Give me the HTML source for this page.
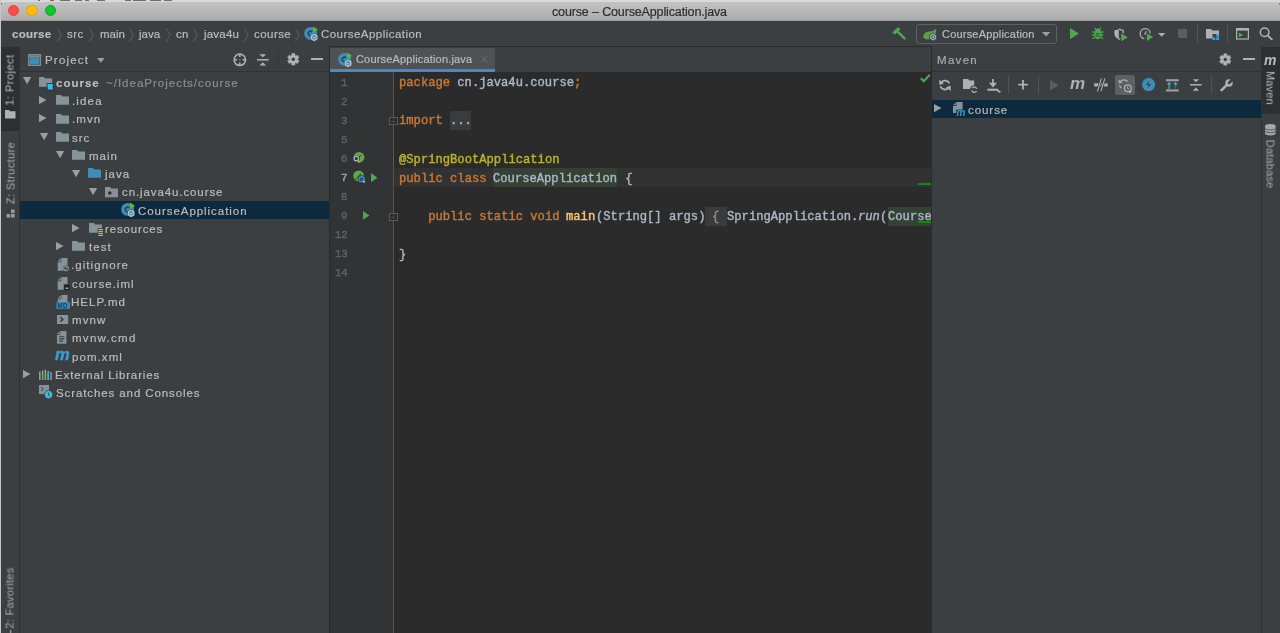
<!DOCTYPE html>
<html><head><meta charset="utf-8">
<style>
*{margin:0;padding:0;box-sizing:border-box}
html,body{width:1280px;height:633px;overflow:hidden;background:#3c3f41}
body{position:relative;font-family:"Liberation Sans",sans-serif;color:#bbbbbb}
.a{position:absolute}
.t{position:absolute;white-space:pre;will-change:transform}
svg{position:absolute;overflow:visible}
</style></head><body>
<div class="a" style="left:0;top:0;width:1280px;height:3px;background:#d9d9d9"></div>
<div class="a" style="left:38px;top:0;width:2px;height:1px;background:#6e6e6e"></div>
<div class="a" style="left:50px;top:0;width:4px;height:1px;background:#6e6e6e"></div>
<div class="a" style="left:60px;top:0;width:10px;height:1px;background:#6e6e6e"></div>
<div class="a" style="left:75px;top:0;width:7px;height:1px;background:#6e6e6e"></div>
<div class="a" style="left:85px;top:0;width:4px;height:1px;background:#6e6e6e"></div>
<div class="a" style="left:97px;top:0;width:8px;height:1px;background:#6e6e6e"></div>
<div class="a" style="left:125px;top:0;width:6px;height:1px;background:#6e6e6e"></div>
<div class="a" style="left:133px;top:0;width:13px;height:1px;background:#6e6e6e"></div>
<div class="a" style="left:150px;top:0;width:11px;height:1px;background:#6e6e6e"></div>
<div class="a" style="left:164px;top:0;width:8px;height:1px;background:#6e6e6e"></div>
<div class="a" style="left:0;top:0;width:1px;height:633px;background:#c8c8c8"></div>
<div class="a" style="left:1px;top:2px;width:1279px;height:19px;background:linear-gradient(#c3c3c4,#acacac);border-radius:4px 4px 0 0"></div>
<div class="a" style="left:1px;top:20px;width:1279px;height:1px;background:#9a9a9a"></div>
<div class="a" style="left:8.00px;top:5.2px;width:11.2px;height:11.2px;border-radius:50%;background:#fd4e4b;border:0.5px solid #e0443e"></div>
<div class="a" style="left:26.40px;top:5.2px;width:11.2px;height:11.2px;border-radius:50%;background:#fdbb0c;border:0.5px solid #dea20a"></div>
<div class="a" style="left:44.70px;top:5.2px;width:11.2px;height:11.2px;border-radius:50%;background:#0dc92c;border:0.5px solid #0aa824"></div>
<div class="t" style="left:551.60px;top:6.00px;font-size:12.5px;line-height:12.5px;color:#2e2e2e;font-weight:400;letter-spacing:-0.14px;font-family:'Liberation Sans';-webkit-text-stroke:0.2px #2e2e2e;">course – CourseApplication.java</div>
<div class="a" style="left:1px;top:21px;width:1279px;height:25px;background:#3c3f41"></div>
<div class="a" style="left:1px;top:45.5px;width:1279px;height:1px;background:#2b2b2b"></div>
<div class="t" style="left:11.60px;top:29.00px;font-size:11.5px;line-height:11.5px;color:#bbbbbb;font-weight:700;letter-spacing:0.3px;font-family:'Liberation Sans';-webkit-text-stroke:0.2px #bbbbbb;">course</div>
<div class="t" style="left:67.20px;top:29.00px;font-size:11.5px;line-height:11.5px;color:#bbbbbb;font-weight:400;letter-spacing:0.5px;font-family:'Liberation Sans';-webkit-text-stroke:0.2px #bbbbbb;">src</div>
<div class="t" style="left:99.60px;top:29.00px;font-size:11.5px;line-height:11.5px;color:#bbbbbb;font-weight:400;letter-spacing:0.0px;font-family:'Liberation Sans';-webkit-text-stroke:0.2px #bbbbbb;">main</div>
<div class="t" style="left:139.00px;top:29.00px;font-size:11.5px;line-height:11.5px;color:#bbbbbb;font-weight:400;letter-spacing:0.0px;font-family:'Liberation Sans';-webkit-text-stroke:0.2px #bbbbbb;">java</div>
<div class="t" style="left:176.20px;top:29.00px;font-size:11.5px;line-height:11.5px;color:#bbbbbb;font-weight:400;letter-spacing:0.2px;font-family:'Liberation Sans';-webkit-text-stroke:0.2px #bbbbbb;">cn</div>
<div class="t" style="left:203.60px;top:29.00px;font-size:11.5px;line-height:11.5px;color:#bbbbbb;font-weight:400;letter-spacing:0.2px;font-family:'Liberation Sans';-webkit-text-stroke:0.2px #bbbbbb;">java4u</div>
<div class="t" style="left:254.20px;top:29.00px;font-size:11.5px;line-height:11.5px;color:#bbbbbb;font-weight:400;letter-spacing:0.45px;font-family:'Liberation Sans';-webkit-text-stroke:0.2px #bbbbbb;">course</div>
<div class="t" style="left:320.80px;top:29.00px;font-size:11.5px;line-height:11.5px;color:#bbbbbb;font-weight:400;letter-spacing:0.46px;font-family:'Liberation Sans';-webkit-text-stroke:0.2px #bbbbbb;">CourseApplication</div>
<svg style="left:56.7px;top:27.5px" width="5" height="14"><path d="M0.5 0.5 L4.2 7 L0.5 13.5" fill="none" stroke="#5b5f62" stroke-width="1"/></svg>
<svg style="left:89px;top:27.5px" width="5" height="14"><path d="M0.5 0.5 L4.2 7 L0.5 13.5" fill="none" stroke="#5b5f62" stroke-width="1"/></svg>
<svg style="left:129px;top:27.5px" width="5" height="14"><path d="M0.5 0.5 L4.2 7 L0.5 13.5" fill="none" stroke="#5b5f62" stroke-width="1"/></svg>
<svg style="left:165.8px;top:27.5px" width="5" height="14"><path d="M0.5 0.5 L4.2 7 L0.5 13.5" fill="none" stroke="#5b5f62" stroke-width="1"/></svg>
<svg style="left:193px;top:27.5px" width="5" height="14"><path d="M0.5 0.5 L4.2 7 L0.5 13.5" fill="none" stroke="#5b5f62" stroke-width="1"/></svg>
<svg style="left:243.5px;top:27.5px" width="5" height="14"><path d="M0.5 0.5 L4.2 7 L0.5 13.5" fill="none" stroke="#5b5f62" stroke-width="1"/></svg>
<svg style="left:295.3px;top:27.5px" width="5" height="14"><path d="M0.5 0.5 L4.2 7 L0.5 13.5" fill="none" stroke="#5b5f62" stroke-width="1"/></svg>
<svg style="left:303.9px;top:26.4px" width="15" height="16" viewBox="0 0 15 16"><circle cx="6.6" cy="7.4" r="6.4" fill="#3d8fb8"/><path d="M8.3 6.0 A2.3 2.3 0 1 0 8.3 8.9" fill="none" stroke="#27485c" stroke-width="1.7"/><path d="M9.0 0.4 L14.1 3.8 L9.0 7.0 Z" fill="#55b93c"/><polygon points="13.74,13.40 10.10,15.50 6.46,13.40 6.46,9.20 10.10,7.10 13.74,9.20" fill="#3c3f41"/><polygon points="12.87,12.90 10.10,14.50 7.33,12.90 7.33,9.70 10.10,8.10 12.87,9.70" fill="#3d8fb8" stroke="#c2c7cc" stroke-width="1.2"/><path d="M8.6 10.9 L10.1 12.3 L11.6 10.9" fill="none" stroke="#e0e4e8" stroke-width="0.9"/></svg>
<svg style="left:891px;top:26.5px" width="15" height="14" viewBox="0 0 15 14"><path d="M1.2 5.6 L6.6 0.6 L8.6 0.9 L9.2 2.6 L4.0 7.6 Z" fill="#4ea851"/><path d="M5.8 3.8 L13.6 11.4" stroke="#4ea851" stroke-width="2.4" stroke-linecap="round"/></svg>
<div class="a" style="left:916.3px;top:24.2px;width:140.6px;height:19.5px;border:1px solid #5e6163;border-radius:3px"></div>
<svg style="left:923.3px;top:28.4px" width="15" height="13" viewBox="0 0 15 13"><path d="M0.3 9.5 C0.0 6.0 2.5 4.0 6.0 3.6 C9.0 3.2 11.5 2.5 13.2 0.4 C13.4 4.5 12.5 8.0 8.0 10.5 C5.0 12.0 2.0 11.5 0.3 9.5 Z" fill="#5a9e45"/><path d="M10.1 5.0 L13.6 7.0 V11.0 L10.1 13.0 L6.6 11.0 V7.0 Z" fill="#9aa6b2" stroke="#3c3f41" stroke-width="0.8"/><circle cx="10.1" cy="9" r="1.6" fill="none" stroke="#56606a" stroke-width="0.9"/></svg>
<div class="t" style="left:941.80px;top:29.00px;font-size:11px;line-height:11px;color:#bbbbbb;font-weight:400;letter-spacing:0.2px;font-family:'Liberation Sans';-webkit-text-stroke:0.2px #bbbbbb;">CourseApplication</div>
<svg style="left:1041.7px;top:32.4px" width="9" height="5" viewBox="0 0 9 5"><path d="M0 0 H8.3 L4.15 4.6 Z" fill="#9e9e9e"/></svg>
<svg style="left:1069.8px;top:28.2px" width="10" height="12" viewBox="0 0 10 12"><path d="M0 0 L8.9 5.6 L0 11.2 Z" fill="#4ea851"/></svg>
<svg style="left:1091.5px;top:27.2px" width="12" height="14" viewBox="0 0 12 14"><ellipse cx="5.8" cy="7.6" rx="3.8" ry="4.6" fill="#4ea851"/><path d="M2.6 0.6 L4.2 3 M9 0.6 L7.4 3 M0.2 5 H2.4 M9.2 5 H11.4 M0.2 8 H2.4 M9.2 8 H11.4 M0.4 11.6 L2.6 10.6 M11.2 11.6 L9 10.6" stroke="#4ea851" stroke-width="1.3"/><ellipse cx="5.8" cy="3.2" rx="2.4" ry="1.6" fill="#4ea851"/><path d="M3.6 6.8 H8 M3.6 9 H8" stroke="#3c3f41" stroke-width="1"/></svg>
<svg style="left:1114.3px;top:28.8px" width="15" height="13" viewBox="0 0 15 13"><path d="M0.4 1.4 L4.8 0.2 V10.4 C2.2 9.4 0.4 7.4 0.4 4.6 Z" fill="#afb1b3"/><path d="M4.8 0.2 L9.2 1.4 V4.2" fill="none" stroke="#afb1b3" stroke-width="1.3"/><path d="M4.8 10.4 L6.2 9.6" stroke="#afb1b3" stroke-width="1.2"/><path d="M7.2 4.4 L13.9 8.3 L7.2 12.2 Z" fill="#4ea851"/></svg>
<svg style="left:1138.6px;top:28px" width="15" height="14" viewBox="0 0 15 14"><path d="M11.2 5.4 A5 5 0 1 0 5.4 10.6" fill="none" stroke="#afb1b3" stroke-width="1.3"/><path d="M5.6 6.6 L7.4 3.2" stroke="#afb1b3" stroke-width="1.2"/><path d="M7.8 5.2 L14.2 9.1 L7.8 13 Z" fill="#4ea851"/></svg>
<svg style="left:1158.4px;top:32.8px" width="8" height="4" viewBox="0 0 8 4"><path d="M0 0 H7.3 L3.65 3.7 Z" fill="#afb1b3"/></svg>
<div class="a" style="left:1177.7px;top:29px;width:9.4px;height:9.3px;background:#5b5d5f"></div>
<div class="a" style="left:1197.2px;top:25px;width:1px;height:17.6px;background:#515456"></div>
<div class="a" style="left:1227.1px;top:25px;width:1px;height:17.6px;background:#515456"></div>
<svg style="left:1205.9px;top:28.9px" width="14" height="12" viewBox="0 0 14 12"><path d="M0 0 H5 L6.3 1.6 H13 V5 H6.5 V9.4 H0 Z" fill="#afb1b3"/><rect x="10.2" y="5" width="2.9" height="2.7" fill="#40a0e0"/><rect x="6.4" y="8.4" width="2.9" height="2.7" fill="#40a0e0"/><rect x="10.2" y="8.4" width="2.9" height="2.7" fill="#40a0e0"/></svg>
<svg style="left:1235.9px;top:27.8px" width="14" height="12" viewBox="0 0 14 12"><rect x="0.6" y="0.6" width="11.8" height="10.4" fill="none" stroke="#afb1b3" stroke-width="1.2"/><rect x="0.6" y="0.6" width="11.8" height="2" fill="#afb1b3"/><path d="M2.8 4.5 L7.2 6.9 L2.8 9.3 Z" fill="#4ea851"/></svg>
<svg style="left:1259px;top:27.2px" width="15" height="14" viewBox="0 0 15 14"><circle cx="5.6" cy="5.3" r="4.3" fill="none" stroke="#afb1b3" stroke-width="1.5"/><path d="M8.6 8.4 L12.8 12.4" stroke="#afb1b3" stroke-width="1.8" stroke-linecap="round"/></svg>
<div class="a" style="left:1px;top:46px;width:19px;height:587px;background:#3c3f41"></div>
<div class="a" style="left:19px;top:46px;width:1px;height:587px;background:#323232"></div>
<div class="a" style="left:1px;top:46.5px;width:18px;height:84.5px;background:#2d2f30"></div>
<div class="a" style="left:20px;top:46px;width:309px;height:587px;background:#3c3f41"></div>
<div class="a" style="left:20px;top:70.5px;width:309px;height:1px;background:#323232"></div>
<div class="t" style="left:44.80px;top:55.00px;font-size:11.5px;line-height:11.5px;color:#bbbbbb;font-weight:400;letter-spacing:1.2px;font-family:'Liberation Sans';-webkit-text-stroke:0.2px #bbbbbb;">Project</div>
<div class="a" style="left:20px;top:201px;width:309px;height:18px;background:#0d293e"></div>
<div class="t" style="left:55.80px;top:78.00px;font-size:11.5px;line-height:11.5px;color:#bbbbbb;font-weight:700;letter-spacing:1.0px;font-family:'Liberation Sans';-webkit-text-stroke:0.2px #bbbbbb;">course</div>
<div class="t" style="left:72.00px;top:96.00px;font-size:11.5px;line-height:11.5px;color:#bbbbbb;font-weight:400;letter-spacing:1.15px;font-family:'Liberation Sans';-webkit-text-stroke:0.2px #bbbbbb;">.idea</div>
<div class="t" style="left:72.00px;top:114.00px;font-size:11.5px;line-height:11.5px;color:#bbbbbb;font-weight:400;letter-spacing:1.1px;font-family:'Liberation Sans';-webkit-text-stroke:0.2px #bbbbbb;">.mvn</div>
<div class="t" style="left:72.40px;top:133.00px;font-size:11.5px;line-height:11.5px;color:#bbbbbb;font-weight:400;letter-spacing:1.0px;font-family:'Liberation Sans';-webkit-text-stroke:0.2px #bbbbbb;">src</div>
<div class="t" style="left:88.60px;top:151.00px;font-size:11.5px;line-height:11.5px;color:#bbbbbb;font-weight:400;letter-spacing:1.0px;font-family:'Liberation Sans';-webkit-text-stroke:0.2px #bbbbbb;">main</div>
<div class="t" style="left:104.90px;top:169.00px;font-size:11.5px;line-height:11.5px;color:#bbbbbb;font-weight:400;letter-spacing:1.0px;font-family:'Liberation Sans';-webkit-text-stroke:0.2px #bbbbbb;">java</div>
<div class="t" style="left:121.90px;top:187.00px;font-size:11.5px;line-height:11.5px;color:#bbbbbb;font-weight:400;letter-spacing:0.9px;font-family:'Liberation Sans';-webkit-text-stroke:0.2px #bbbbbb;">cn.java4u.course</div>
<div class="t" style="left:138.40px;top:206.00px;font-size:11.5px;line-height:11.5px;color:#bbbbbb;font-weight:400;letter-spacing:0.95px;font-family:'Liberation Sans';-webkit-text-stroke:0.2px #bbbbbb;">CourseApplication</div>
<div class="t" style="left:105.30px;top:224.00px;font-size:11.5px;line-height:11.5px;color:#bbbbbb;font-weight:400;letter-spacing:0.84px;font-family:'Liberation Sans';-webkit-text-stroke:0.2px #bbbbbb;">resources</div>
<div class="t" style="left:88.70px;top:242.00px;font-size:11.5px;line-height:11.5px;color:#bbbbbb;font-weight:400;letter-spacing:1.03px;font-family:'Liberation Sans';-webkit-text-stroke:0.2px #bbbbbb;">test</div>
<div class="t" style="left:71.30px;top:260.00px;font-size:11.5px;line-height:11.5px;color:#bbbbbb;font-weight:400;letter-spacing:1.07px;font-family:'Liberation Sans';-webkit-text-stroke:0.2px #bbbbbb;">.gitignore</div>
<div class="t" style="left:71.90px;top:279.00px;font-size:11.5px;line-height:11.5px;color:#bbbbbb;font-weight:400;letter-spacing:1.02px;font-family:'Liberation Sans';-webkit-text-stroke:0.2px #bbbbbb;">course.iml</div>
<div class="t" style="left:71.30px;top:297.00px;font-size:11.5px;line-height:11.5px;color:#bbbbbb;font-weight:400;letter-spacing:1.03px;font-family:'Liberation Sans';-webkit-text-stroke:0.2px #bbbbbb;">HELP.md</div>
<div class="t" style="left:71.80px;top:315.00px;font-size:11.5px;line-height:11.5px;color:#bbbbbb;font-weight:400;letter-spacing:1.1px;font-family:'Liberation Sans';-webkit-text-stroke:0.2px #bbbbbb;">mvnw</div>
<div class="t" style="left:71.80px;top:333.00px;font-size:11.5px;line-height:11.5px;color:#bbbbbb;font-weight:400;letter-spacing:1.28px;font-family:'Liberation Sans';-webkit-text-stroke:0.2px #bbbbbb;">mvnw.cmd</div>
<div class="t" style="left:71.80px;top:352.00px;font-size:11.5px;line-height:11.5px;color:#bbbbbb;font-weight:400;letter-spacing:1.07px;font-family:'Liberation Sans';-webkit-text-stroke:0.2px #bbbbbb;">pom.xml</div>
<div class="t" style="left:55.20px;top:370.00px;font-size:11.5px;line-height:11.5px;color:#bbbbbb;font-weight:400;letter-spacing:0.87px;font-family:'Liberation Sans';-webkit-text-stroke:0.2px #bbbbbb;">External Libraries</div>
<div class="t" style="left:55.80px;top:388.00px;font-size:11.5px;line-height:11.5px;color:#bbbbbb;font-weight:400;letter-spacing:0.9px;font-family:'Liberation Sans';-webkit-text-stroke:0.2px #bbbbbb;">Scratches and Consoles</div>
<div class="t" style="left:106.00px;top:78.00px;font-size:11.5px;line-height:11.5px;color:#8c8c8c;font-weight:400;letter-spacing:1.0px;font-family:'Liberation Sans';-webkit-text-stroke:0.2px #8c8c8c;">~/IdeaProjects/course</div>
<svg style="left:23px;top:77.4px" width="8.2" height="7.4" viewBox="0 0 8.2 7.4"><path d="M0 0 H8.2 L4.1 7.2 Z" fill="#9e9e9e"/></svg>
<svg style="left:38.9px;top:76.9px" width="15" height="14" viewBox="0 0 15 14"><path d="M0 0 H5 L6.3 1.4 H13.2 V9.8 H0 Z" fill="#87939a"/><rect x="8.1" y="6.6" width="6.1" height="6.4" fill="#40b6e0" stroke="#2b2b2b" stroke-width="0.8"/></svg>
<svg style="left:38.9px;top:96.24px" width="7.6" height="8.4" viewBox="0 0 7.6 8.4"><path d="M0 0 L7.5 4.1 L0 8.2 Z" fill="#9e9e9e"/></svg>
<svg style="left:55.7px;top:95.33999999999999px" width="13" height="9.8" viewBox="0 0 13 9.8"><path d="M0 0 H5 L6.3 1.5 H13 V9.8 H0 Z" fill="#87939a"/></svg>
<svg style="left:38.9px;top:114.48px" width="7.6" height="8.4" viewBox="0 0 7.6 8.4"><path d="M0 0 L7.5 4.1 L0 8.2 Z" fill="#9e9e9e"/></svg>
<svg style="left:55.7px;top:113.58px" width="13" height="9.8" viewBox="0 0 13 9.8"><path d="M0 0 H5 L6.3 1.5 H13 V9.8 H0 Z" fill="#87939a"/></svg>
<svg style="left:39.5px;top:133.11999999999998px" width="8.2" height="7.4" viewBox="0 0 8.2 7.4"><path d="M0 0 H8.2 L4.1 7.2 Z" fill="#9e9e9e"/></svg>
<svg style="left:55.9px;top:131.82px" width="13" height="9.8" viewBox="0 0 13 9.8"><path d="M0 0 H5 L6.3 1.5 H13 V9.8 H0 Z" fill="#87939a"/></svg>
<svg style="left:56.0px;top:151.35999999999999px" width="8.2" height="7.4" viewBox="0 0 8.2 7.4"><path d="M0 0 H8.2 L4.1 7.2 Z" fill="#9e9e9e"/></svg>
<svg style="left:72.2px;top:150.06px" width="13" height="9.8" viewBox="0 0 13 9.8"><path d="M0 0 H5 L6.3 1.5 H13 V9.8 H0 Z" fill="#87939a"/></svg>
<svg style="left:72.2px;top:169.6px" width="8.2" height="7.4" viewBox="0 0 8.2 7.4"><path d="M0 0 H8.2 L4.1 7.2 Z" fill="#9e9e9e"/></svg>
<svg style="left:88.4px;top:168.3px" width="13" height="9.8" viewBox="0 0 13 9.8"><path d="M0 0 H5 L6.3 1.5 H13 V9.8 H0 Z" fill="#3d8db5"/></svg>
<svg style="left:88.5px;top:187.84px" width="8.2" height="7.4" viewBox="0 0 8.2 7.4"><path d="M0 0 H8.2 L4.1 7.2 Z" fill="#9e9e9e"/></svg>
<svg style="left:105.1px;top:186.54000000000002px" width="13.2" height="10.2" viewBox="0 0 13.2 10.2"><path d="M0 0 H5 L6.3 1.4 H13 V10.2 H0 Z" fill="#87939a"/><circle cx="4.8" cy="6.0" r="1.8" fill="#2e3133"/></svg>
<svg style="left:120.8px;top:202.17999999999998px" width="15" height="16" viewBox="0 0 15 16"><circle cx="6.6" cy="7.4" r="6.4" fill="#3d8fb8"/><path d="M8.3 6.0 A2.3 2.3 0 1 0 8.3 8.9" fill="none" stroke="#27485c" stroke-width="1.7"/><path d="M9.0 0.4 L14.1 3.8 L9.0 7.0 Z" fill="#55b93c"/><polygon points="13.74,13.40 10.10,15.50 6.46,13.40 6.46,9.20 10.10,7.10 13.74,9.20" fill="#0d293e"/><polygon points="12.87,12.90 10.10,14.50 7.33,12.90 7.33,9.70 10.10,8.10 12.87,9.70" fill="#3d8fb8" stroke="#c2c7cc" stroke-width="1.2"/><path d="M8.6 10.9 L10.1 12.3 L11.6 10.9" fill="none" stroke="#e0e4e8" stroke-width="0.9"/></svg>
<svg style="left:72.1px;top:223.91999999999996px" width="7.6" height="8.4" viewBox="0 0 7.6 8.4"><path d="M0 0 L7.5 4.1 L0 8.2 Z" fill="#9e9e9e"/></svg>
<svg style="left:88.6px;top:223.01999999999998px" width="15" height="14" viewBox="0 0 15 14"><path d="M0 0 H5 L6.3 1.4 H13 V9.8 H0 Z" fill="#87939a"/><rect x="8.6" y="5.2" width="6" height="8" fill="#3c3f41"/><path d="M9.3 6.6 H14 M9.3 8.5 H14 M9.3 10.4 H14 M9.3 12.3 H14" stroke="#d9a343" stroke-width="1.2"/></svg>
<svg style="left:55.7px;top:242.15999999999997px" width="7.6" height="8.4" viewBox="0 0 7.6 8.4"><path d="M0 0 L7.5 4.1 L0 8.2 Z" fill="#9e9e9e"/></svg>
<svg style="left:71.8px;top:241.26px" width="13" height="9.8" viewBox="0 0 13 9.8"><path d="M0 0 H5 L6.3 1.5 H13 V9.8 H0 Z" fill="#87939a"/></svg>
<svg style="left:56.5px;top:258.09999999999997px" width="14" height="15" viewBox="0 0 14 15"><path d="M4.3 0 H10.5 V12.7 H0.7 V4.2 H4.3 Z M0.7 3.4 L3.7 0.2 V3.4 Z" fill="#87939a"/><circle cx="9" cy="10.4" r="3.2" fill="#3c3f41"/><circle cx="9" cy="10.4" r="2.5" fill="none" stroke="#9aa4ab" stroke-width="1"/><path d="M7.4 12 L10.6 8.8" stroke="#9aa4ab" stroke-width="1"/></svg>
<svg style="left:56.5px;top:276.54px" width="14" height="15" viewBox="0 0 14 15"><path d="M4.3 0 H10.5 V12.7 H0.7 V4.2 H4.3 Z M0.7 3.4 L3.7 0.2 V3.4 Z" fill="#87939a"/><rect x="7" y="7.6" width="5.8" height="5.6" fill="#1e1e1e" stroke="#3c3f41" stroke-width="0.6"/><rect x="8.6" y="10.6" width="2.6" height="1.2" fill="#cfcfcf"/></svg>
<svg style="left:55.5px;top:294.58px" width="15" height="15" viewBox="0 0 15 15"><path d="M5.3 0 H11.5 V7.5 H1.7 V4.2 H5.3 Z M1.7 3.4 L4.7 0.2 V3.4 Z" fill="#87939a"/><rect x="0.5" y="7.3" width="13.4" height="6.4" fill="#3592c4"/><text x="1.6" y="12.9" font-family="Liberation Sans" font-size="6.4" font-weight="700" fill="#1f3b52">MD</text></svg>
<svg style="left:56.5px;top:315.1px" width="12" height="10" viewBox="0 0 12 10"><rect x="0" y="0" width="11.2" height="9" fill="#87939a"/><path d="M3.2 2.2 L6 4.5 L3.2 6.8" fill="none" stroke="#2e3133" stroke-width="1.2"/></svg>
<svg style="left:57.3px;top:331.3px" width="10" height="13" viewBox="0 0 10 13"><path d="M3.4 0 H9.4 V12.7 H0 V3.8 H3.4 Z" fill="#87939a"/><path d="M0 3.1 L2.8 0.2 V3.1 Z" fill="#87939a"/><path d="M2.2 5.7 H7.4 M2.2 7.9 H7.4 M2.2 10.1 H6.0" stroke="#3c3f41" stroke-width="1.1"/></svg>
<div class="t" style="left:55.3px;top:346.30px;font-family:'Liberation Sans';font-size:16.5px;line-height:16px;font-weight:700;font-style:italic;color:#3a9bd0;letter-spacing:-0.5px;-webkit-text-stroke:0.5px #3a9bd0">m</div>
<svg style="left:23.3px;top:369.84px" width="7.6" height="8.4" viewBox="0 0 7.6 8.4"><path d="M0 0 L7.5 4.1 L0 8.2 Z" fill="#9e9e9e"/></svg>
<svg style="left:39px;top:368.64px" width="14" height="12" viewBox="0 0 14 12"><path d="M0.8 2.5 V11 M3.6 1.5 V11 M6.4 0.8 V11 M9.2 2 V11 M12 3 V11" stroke-width="1.4" stroke="#9aa4ab"/><path d="M3.6 4 V11" stroke="#62b543" stroke-width="1.4"/><path d="M9.2 4 V11" stroke="#40b6e0" stroke-width="1.4"/></svg>
<svg style="left:39px;top:384.98px" width="15" height="15" viewBox="0 0 15 15"><rect x="0" y="0" width="10" height="9" fill="#87939a"/><path d="M2 2 L4.5 4 L2 6" fill="none" stroke="#3c3f41" stroke-width="1"/><circle cx="9.6" cy="9.6" r="4.2" fill="#40b6e0" stroke="#3c3f41" stroke-width="0.8"/><path d="M9.4 7.6 V9.8 L10.9 11" fill="none" stroke="#1e4b63" stroke-width="1"/></svg>
<svg style="left:27.9px;top:53.9px" width="14" height="13" viewBox="0 0 14 13"><rect x="0.7" y="0.7" width="11.7" height="10.6" fill="none" stroke="#7f8b91" stroke-width="1.4"/><rect x="1.4" y="1.4" width="10.3" height="2" fill="#7f8b91"/><rect x="1.8" y="3.4" width="9.5" height="7" fill="#3d8fb5"/></svg>
<svg style="left:96.5px;top:58px" width="8" height="5" viewBox="0 0 8 5"><path d="M0 0 H7.7 L3.85 4.7 Z" fill="#9e9e9e"/></svg>
<svg style="left:232.6px;top:52.6px" width="14" height="14" viewBox="0 0 14 14"><circle cx="6.8" cy="6.8" r="5.7" fill="none" stroke="#afb1b3" stroke-width="1.6"/><path d="M6.8 1 V4.0 M6.8 9.6 V12.6 M1 6.8 H4.0 M9.6 6.8 H12.6" stroke="#afb1b3" stroke-width="1.6"/><circle cx="6.8" cy="6.8" r="0.8" fill="#8a8c8e"/></svg>
<svg style="left:257.3px;top:53.6px" width="12" height="12" viewBox="0 0 12 12"><path d="M0 5.8 H11.6" stroke="#afb1b3" stroke-width="1.5"/><path d="M2.4 0.2 H9.2 L5.8 3.3 Z M2.4 11.4 H9.2 L5.8 8.3 Z" fill="#afb1b3"/></svg>
<div class="a" style="left:278px;top:50.4px;width:1px;height:17.5px;background:#323436"></div>
<svg style="left:286px;top:52px" width="15" height="15" viewBox="0 0 15 15"><path d="M5.77 1.60 L8.83 1.60 L8.91 3.31 L9.95 3.91 L11.47 3.13 L13.00 5.77 L11.56 6.70 L11.56 7.90 L13.00 8.83 L11.47 11.47 L9.95 10.69 L8.91 11.29 L8.83 13.00 L5.77 13.00 L5.69 11.29 L4.65 10.69 L3.13 11.47 L1.60 8.83 L3.04 7.90 L3.04 6.70 L1.60 5.77 L3.13 3.13 L4.65 3.91 L5.69 3.31 Z" fill="#afb1b3" stroke="#afb1b3" stroke-width="0.5" stroke-linejoin="round"/><circle cx="7.3" cy="7.3" r="1.7" fill="#3c3f41"/></svg>
<div class="a" style="left:311.3px;top:58.4px;width:11.4px;height:2px;background:#afb1b3"></div>
<div class="a" style="left:329px;top:46px;width:603px;height:587px;background:#2b2b2b"></div>
<div class="a" style="left:329px;top:46px;width:1px;height:587px;background:#2b2b2b"></div>
<div class="a" style="left:330px;top:46.5px;width:602px;height:25.5px;background:#3c3f41"></div>
<div class="a" style="left:330px;top:47.5px;width:165.3px;height:24.5px;background:#4e5254"></div>
<div class="a" style="left:330px;top:68.8px;width:165.3px;height:3.1px;background:#4a88c7"></div>
<div class="t" style="left:356.00px;top:54.00px;font-size:11px;line-height:11px;color:#bbbbbb;font-weight:400;letter-spacing:0.17px;font-family:'Liberation Sans';-webkit-text-stroke:0.2px #bbbbbb;">CourseApplication.java</div>
<div class="a" style="left:330px;top:72px;width:63.5px;height:561px;background:#313335"></div>
<div class="a" style="left:393.3px;top:72px;width:0.8px;height:561px;background:#555555"></div>
<div class="a" style="left:394px;top:168.2px;width:537px;height:19.1px;background:#323232"></div>
<div class="a" style="left:449.60px;top:110.6px;width:21.90px;height:19.1px;background:#3b3b3b"></div>
<div class="a" style="left:493.40px;top:168.3px;width:124.10px;height:18.6px;background:#344134"></div>
<div class="a" style="left:705.10px;top:206.66px;width:21.90px;height:19.1px;background:#3b3b3b"></div>
<div class="a" style="left:887.60px;top:206.66px;width:43.40px;height:19.1px;background:#344134"></div>
<div class="a" style="left:917.9px;top:221.46px;width:13.3px;height:1.7px;background:#0f8a12"></div>
<div class="a" style="left:917.9px;top:182.8px;width:13.3px;height:1.9px;background:#0f8a12"></div>
<div class="t" style="left:398.50px;top:74.32px;font-family:'Liberation Mono';font-size:12.17px;line-height:19.08px;color:#cc7832;-webkit-text-stroke:0.4px currentColor;">package</div>
<div class="t" style="left:449.60px;top:74.32px;font-family:'Liberation Mono';font-size:12.17px;line-height:19.08px;color:#a9b7c6;-webkit-text-stroke:0.4px currentColor;"> cn.java4u.course</div>
<div class="t" style="left:573.70px;top:74.32px;font-family:'Liberation Mono';font-size:12.17px;line-height:19.08px;color:#cc7832;-webkit-text-stroke:0.4px currentColor;">;</div>
<div class="t" style="left:398.50px;top:112.48px;font-family:'Liberation Mono';font-size:12.17px;line-height:19.08px;color:#cc7832;-webkit-text-stroke:0.4px currentColor;">import</div>
<div class="t" style="left:442.30px;top:112.48px;font-family:'Liberation Mono';font-size:12.17px;line-height:19.08px;color:#a9b7c6;"> </div>
<div class="t" style="left:449.60px;top:112.48px;font-family:'Liberation Mono';font-size:12.17px;line-height:19.08px;color:#a9b7c6;-webkit-text-stroke:0.4px currentColor;">...</div>
<div class="t" style="left:398.50px;top:150.64px;font-family:'Liberation Mono';font-size:12.17px;line-height:19.08px;color:#bbb529;-webkit-text-stroke:0.4px currentColor;">@SpringBootApplication</div>
<div class="t" style="left:398.50px;top:169.72px;font-family:'Liberation Mono';font-size:12.17px;line-height:19.08px;color:#cc7832;-webkit-text-stroke:0.4px currentColor;">public class </div>
<div class="t" style="left:493.40px;top:169.72px;font-family:'Liberation Mono';font-size:12.17px;line-height:19.08px;color:#a9b7c6;-webkit-text-stroke:0.4px currentColor;">CourseApplication</div>
<div class="t" style="left:617.50px;top:169.72px;font-family:'Liberation Mono';font-size:12.17px;line-height:19.08px;color:#a9b7c6;-webkit-text-stroke:0.4px currentColor;"> {</div>
<div class="a" style="left:0;top:0;width:931px;height:633px;overflow:hidden">
<div class="t" style="left:398.50px;top:207.88px;font-family:'Liberation Mono';font-size:12.17px;line-height:19.08px;color:#cc7832;-webkit-text-stroke:0.4px currentColor;">    public static void </div>
<div class="t" style="left:566.40px;top:207.88px;font-family:'Liberation Mono';font-size:12.17px;line-height:19.08px;color:#ffc66d;-webkit-text-stroke:0.4px currentColor;">main</div>
<div class="t" style="left:595.60px;top:207.88px;font-family:'Liberation Mono';font-size:12.17px;line-height:19.08px;color:#a9b7c6;-webkit-text-stroke:0.4px currentColor;">(String[] args) </div>
<div class="t" style="left:712.40px;top:207.88px;font-family:'Liberation Mono';font-size:12.17px;line-height:19.08px;color:#8c8c8c;-webkit-text-stroke:0.4px currentColor;">{</div>
<div class="t" style="left:719.70px;top:207.88px;font-family:'Liberation Mono';font-size:12.17px;line-height:19.08px;color:#a9b7c6;"> </div>
<div class="t" style="left:727.00px;top:207.88px;font-family:'Liberation Mono';font-size:12.17px;line-height:19.08px;color:#a9b7c6;-webkit-text-stroke:0.4px currentColor;">SpringApplication.</div>
<div class="t" style="left:858.40px;top:207.88px;font-family:'Liberation Mono';font-size:12.17px;line-height:19.08px;color:#a9b7c6;-webkit-text-stroke:0.4px currentColor;font-style:italic;">run</div>
<div class="t" style="left:880.30px;top:207.88px;font-family:'Liberation Mono';font-size:12.17px;line-height:19.08px;color:#a9b7c6;-webkit-text-stroke:0.4px currentColor;">(</div>
<div class="t" style="left:887.60px;top:207.88px;font-family:'Liberation Mono';font-size:12.17px;line-height:19.08px;color:#a9b7c6;-webkit-text-stroke:0.4px currentColor;">CourseApplication.class, args); }</div>
</div>
<div class="t" style="left:398.50px;top:246.04px;font-family:'Liberation Mono';font-size:12.17px;line-height:19.08px;color:#a9b7c6;-webkit-text-stroke:0.4px currentColor;">}</div>
<div class="t" style="left:341.24px;top:73.54px;font-family:'Liberation Mono';font-size:10.6px;line-height:19.08px;color:#606366;-webkit-text-stroke:0.4px currentColor;">1</div>
<div class="t" style="left:341.24px;top:92.62px;font-family:'Liberation Mono';font-size:10.6px;line-height:19.08px;color:#606366;-webkit-text-stroke:0.4px currentColor;">2</div>
<div class="t" style="left:341.24px;top:111.70px;font-family:'Liberation Mono';font-size:10.6px;line-height:19.08px;color:#606366;-webkit-text-stroke:0.4px currentColor;">3</div>
<div class="t" style="left:341.24px;top:130.78px;font-family:'Liberation Mono';font-size:10.6px;line-height:19.08px;color:#606366;-webkit-text-stroke:0.4px currentColor;">5</div>
<div class="t" style="left:341.24px;top:149.86px;font-family:'Liberation Mono';font-size:10.6px;line-height:19.08px;color:#606366;-webkit-text-stroke:0.4px currentColor;">6</div>
<div class="t" style="left:341.24px;top:168.94px;font-family:'Liberation Mono';font-size:10.6px;line-height:19.08px;color:#a4a3a3;-webkit-text-stroke:0.4px currentColor;">7</div>
<div class="t" style="left:341.24px;top:188.02px;font-family:'Liberation Mono';font-size:10.6px;line-height:19.08px;color:#606366;-webkit-text-stroke:0.4px currentColor;">8</div>
<div class="t" style="left:341.24px;top:207.10px;font-family:'Liberation Mono';font-size:10.6px;line-height:19.08px;color:#606366;-webkit-text-stroke:0.4px currentColor;">9</div>
<div class="t" style="left:334.88px;top:226.18px;font-family:'Liberation Mono';font-size:10.6px;line-height:19.08px;color:#606366;-webkit-text-stroke:0.4px currentColor;">12</div>
<div class="t" style="left:334.88px;top:245.26px;font-family:'Liberation Mono';font-size:10.6px;line-height:19.08px;color:#606366;-webkit-text-stroke:0.4px currentColor;">13</div>
<div class="t" style="left:334.88px;top:264.34px;font-family:'Liberation Mono';font-size:10.6px;line-height:19.08px;color:#606366;-webkit-text-stroke:0.4px currentColor;">14</div>
<svg style="left:337.8px;top:52.0px" width="15" height="16" viewBox="0 0 15 16"><circle cx="6.6" cy="7.4" r="6.4" fill="#3d8fb8"/><path d="M8.3 6.0 A2.3 2.3 0 1 0 8.3 8.9" fill="none" stroke="#27485c" stroke-width="1.7"/><path d="M9.0 0.4 L14.1 3.8 L9.0 7.0 Z" fill="#55b93c"/><polygon points="13.74,13.40 10.10,15.50 6.46,13.40 6.46,9.20 10.10,7.10 13.74,9.20" fill="#4e5254"/><polygon points="12.87,12.90 10.10,14.50 7.33,12.90 7.33,9.70 10.10,8.10 12.87,9.70" fill="#3d8fb8" stroke="#c2c7cc" stroke-width="1.2"/><path d="M8.6 10.9 L10.1 12.3 L11.6 10.9" fill="none" stroke="#e0e4e8" stroke-width="0.9"/></svg>
<svg style="left:481.3px;top:55.9px" width="7" height="7" viewBox="0 0 7 7"><path d="M0.4 0.4 L6.4 6.4 M6.4 0.4 L0.4 6.4" stroke="#6e7072" stroke-width="1"/></svg>
<svg style="left:919.5px;top:73.8px" width="11" height="9" viewBox="0 0 11 9"><path d="M0.8 4.2 L3.8 7.2 L9.8 0.8" fill="none" stroke="#4ea851" stroke-width="2"/></svg>
<svg style="left:352px;top:150px" width="15" height="15" viewBox="0 0 15 15"><circle cx="7.0" cy="7.3" r="5.4" fill="#5fa843"/><path d="M3.22 11.08 L9.43 4.869999999999999" stroke="#313335" stroke-width="0.9"/><circle cx="4.6" cy="8.8" r="3.4" fill="#313335"/><circle cx="4.3" cy="8.6" r="2.3" fill="none" stroke="#b4bac0" stroke-width="1.2"/><path d="M6 10.4 L7.8 12.2" stroke="#b4bac0" stroke-width="1.3"/></svg>
<svg style="left:352px;top:169px" width="15" height="15" viewBox="0 0 15 15"><circle cx="6.7" cy="6.9" r="5.4" fill="#5fa843"/><path d="M2.9200000000000004 10.68 L9.13 4.470000000000001" stroke="#313335" stroke-width="0.9"/><circle cx="9.6" cy="10.2" r="3.9" fill="#313335"/><circle cx="9.6" cy="10.2" r="3.2" fill="#3592c4"/><path d="M8.2 10.2 H11 A1.5 1.5 0 1 0 10.6 11.6" fill="none" stroke="#1b3c57" stroke-width="0.9"/><path d="M10.6 12.2 L13.4 12.2 L12 14 Z" fill="#dfe3e6"/></svg>
<svg style="left:370.8px;top:172.5px" width="8" height="10" viewBox="0 0 8 10"><path d="M0 0 L6.4 4.65 L0 9.3 Z" fill="#4ea851"/></svg>
<svg style="left:362.5px;top:211px" width="8" height="10" viewBox="0 0 8 10"><path d="M0 0 L6.4 4.4 L0 8.8 Z" fill="#4ea851"/></svg>
<div class="a" style="left:389.1px;top:117px;width:8.6px;height:8px;border:1px solid #5a5a5a;background:#2b2b2b"></div>
<div class="a" style="left:391.3px;top:120.5px;width:4.2px;height:1px;background:#4a4a4a"></div>
<div class="a" style="left:392.9px;top:119px;width:1px;height:4px;background:#4a4a4a"></div>
<div class="a" style="left:389.1px;top:213px;width:8.6px;height:8px;border:1px solid #5a5a5a;background:#2b2b2b"></div>
<div class="a" style="left:391.3px;top:216.5px;width:4.2px;height:1px;background:#4a4a4a"></div>
<div class="a" style="left:392.9px;top:215px;width:1px;height:4px;background:#4a4a4a"></div>
<div class="a" style="left:931px;top:46px;width:330px;height:587px;background:#3c3f41"></div>
<div class="a" style="left:931px;top:46px;width:1px;height:587px;background:#2b2b2b"></div>
<div class="a" style="left:932px;top:70.6px;width:329px;height:1px;background:#323232"></div>
<div class="t" style="left:936.70px;top:55.00px;font-size:11.5px;line-height:11.5px;color:#a9a9a9;font-weight:400;letter-spacing:1.3px;font-family:'Liberation Sans';-webkit-text-stroke:0.2px #a9a9a9;">Maven</div>
<div class="a" style="left:932px;top:99.6px;width:329px;height:18px;background:#0d293e"></div>
<div class="t" style="left:968.00px;top:105.00px;font-size:11.5px;line-height:11.5px;color:#bbbbbb;font-weight:400;letter-spacing:0.94px;font-family:'Liberation Sans';-webkit-text-stroke:0.2px #bbbbbb;">course</div>
<svg style="left:1219px;top:53px" width="13" height="13" viewBox="0 0 13 13"><path d="M4.77 0.80 L7.83 0.80 L7.91 2.51 L8.95 3.11 L10.47 2.33 L12.00 4.97 L10.56 5.90 L10.56 7.10 L12.00 8.03 L10.47 10.67 L8.95 9.89 L7.91 10.49 L7.83 12.20 L4.77 12.20 L4.69 10.49 L3.65 9.89 L2.13 10.67 L0.60 8.03 L2.04 7.10 L2.04 5.90 L0.60 4.97 L2.13 2.33 L3.65 3.11 L4.69 2.51 Z" fill="#afb1b3" stroke="#afb1b3" stroke-width="0.5" stroke-linejoin="round"/><circle cx="6.3" cy="6.5" r="1.7" fill="#3c3f41"/></svg>
<div class="a" style="left:1243px;top:58.4px;width:11.6px;height:2px;background:#afb1b3"></div>
<svg style="left:939.4px;top:79px" width="13" height="13" viewBox="0 0 13 13"><path d="M10.4 4.4 A4.7 4.7 0 0 0 2.4 3.4" fill="none" stroke="#afb1b3" stroke-width="1.8"/><path d="M1.4 7.4 A4.7 4.7 0 0 0 9.4 8.8" fill="none" stroke="#afb1b3" stroke-width="1.8"/><path d="M0.2 0.8 L0.4 6.0 L5.0 4.6 Z M11.8 12.0 L11.6 6.8 L7.0 8.2 Z" fill="#afb1b3"/></svg>
<svg style="left:962.8px;top:79px" width="16" height="15" viewBox="0 0 16 15"><path d="M0 0 H5 L6.5 1.6 H11.2 V9.9 H0 Z" fill="#afb1b3"/><circle cx="11.2" cy="10.6" r="4.3" fill="#3c3f41"/><path d="M13.6 9.8 A2.5 2.5 0 0 0 8.9 9.2 M8.8 11.4 A2.5 2.5 0 0 0 13.5 12" fill="none" stroke="#afb1b3" stroke-width="1.3"/></svg>
<svg style="left:987px;top:79px" width="15" height="15" viewBox="0 0 15 15"><path d="M6 0 V6.4" stroke="#afb1b3" stroke-width="1.8"/><path d="M2.0 3.8 H10.0 L6 8.6 Z" fill="#afb1b3"/><path d="M0.4 10.7 H10.6" stroke="#afb1b3" stroke-width="2"/><path d="M10.0 10.6 L12.0 12.6" stroke="#afb1b3" stroke-width="1.8"/><path d="M10.4 12.0 L14.2 12.0 L12.3 14.0 Z" fill="#afb1b3"/></svg>
<div class="a" style="left:1008px;top:76px;width:1px;height:18px;background:#515456"></div>
<svg style="left:1018px;top:80.3px" width="11" height="10" viewBox="0 0 11 10"><path d="M5 0 V9.4 M0.3 4.7 H9.8" stroke="#afb1b3" stroke-width="1.8"/></svg>
<div class="a" style="left:1038px;top:76px;width:1px;height:18px;background:#515456"></div>
<svg style="left:1049.8px;top:79.8px" width="10" height="11" viewBox="0 0 10 11"><path d="M0 0 L8.8 5.25 L0 10.5 Z" fill="#5b5d5f"/></svg>
<div class="t" style="left:1070.1px;top:74.5px;font-family:'Liberation Sans';font-size:17px;line-height:17px;font-weight:700;font-style:italic;color:#afb1b3;letter-spacing:-0.3px">m</div>
<svg style="left:1093.8px;top:78px" width="15" height="14" viewBox="0 0 15 14"><path d="M0.2 6.9 H13.6" stroke="#afb1b3" stroke-width="3.2"/><path d="M3.4 13.4 L7.4 0.4 M6.9 13.4 L10.9 0.4" stroke="#3c3f41" stroke-width="2.6"/><path d="M3.4 13.4 L7.4 0.4 M6.9 13.4 L10.9 0.4" stroke="#afb1b3" stroke-width="1.1"/></svg>
<div class="a" style="left:1114.8px;top:75px;width:20.2px;height:19.9px;background:#5c6164;border-radius:2px"></div>
<svg style="left:1118px;top:78.5px" width="14" height="14" viewBox="0 0 14 14"><path d="M9.6 2.6 A4.6 4.6 0 0 0 2.6 2.4" fill="none" stroke="#afb1b3" stroke-width="1.4"/><path d="M0.6 0.4 L0.8 4.6 L4.6 3.6 Z" fill="#afb1b3"/><path d="M1.4 6.6 L3.2 9" stroke="#afb1b3" stroke-width="1.3"/><circle cx="9.8" cy="9.2" r="3.4" fill="none" stroke="#afb1b3" stroke-width="1.2"/><path d="M9.6 7.6 V9.6 H11" fill="none" stroke="#afb1b3" stroke-width="0.9"/><path d="M10.6 12.6 L13.6 12.6 L12.1 14 Z" fill="#e0e0e0"/></svg>
<svg style="left:1141.8px;top:78.2px" width="14" height="14" viewBox="0 0 14 14"><circle cx="6.6" cy="6.6" r="6.5" fill="#3d8eb9"/><path d="M7.6 2.6 L3.6 7 H6.6 L5.4 10.6 L9.6 6 H6.6 Z" fill="#29516b"/></svg>
<svg style="left:1165.8px;top:78.6px" width="14" height="13" viewBox="0 0 14 13"><rect x="0" y="0.2" width="12.8" height="2.1" fill="#9aa0a4"/><rect x="0" y="10.4" width="12.8" height="2.1" fill="#9aa0a4"/><path d="M3.1 4.4 V10" stroke="#40b6e0" stroke-width="1.2"/><path d="M0.9 5.6 L3.1 2.9 L5.3 5.6 Z M7.4 5.6 L9.6 2.9 L11.8 5.6 Z" fill="#40b6e0"/><path d="M9.6 5 V10" stroke="#40b6e0" stroke-width="1.2" stroke-dasharray="1.2 1.2"/></svg>
<svg style="left:1190px;top:79px" width="12" height="12" viewBox="0 0 12 12"><path d="M0 5.8 H11.6" stroke="#afb1b3" stroke-width="1.5"/><path d="M2.8 0.3 H9 L5.9 3.2 Z M2.8 11.7 H9 L5.9 8.6 Z" fill="#afb1b3"/></svg>
<div class="a" style="left:1210.8px;top:76px;width:1px;height:17.5px;background:#515456"></div>
<svg style="left:1220px;top:78.5px" width="14" height="14" viewBox="0 0 14 14"><path d="M1.6 11.2 L7.2 5.6" stroke="#afb1b3" stroke-width="2.5" stroke-linecap="round"/><circle cx="9.0" cy="4.0" r="3.7" fill="#afb1b3"/><path d="M9.0 4.0 L13.6 -0.6" stroke="#3c3f41" stroke-width="2.6"/><circle cx="9.0" cy="4.0" r="1.2" fill="#3c3f41"/></svg>
<svg style="left:934.4px;top:104.1px" width="7.6" height="8.4" viewBox="0 0 7.6 8.4"><path d="M0 0 L7.5 4.1 L0 8.2 Z" fill="#9e9e9e"/></svg>
<svg style="left:952.9px;top:102px" width="15" height="15" viewBox="0 0 15 15"><path d="M3.4 0 H9.6 V11 H0 V4 H3.4 Z M0 3.2 L2.8 0.2 V3.2 Z" fill="#87939a"/><rect x="3.2" y="7.6" width="9" height="6.8" fill="#0d293e"/><text x="3.4" y="14" font-family="Liberation Sans" font-size="10" font-weight="700" font-style="italic" fill="#3a9bd0">m</text></svg>
<div class="a" style="left:1261px;top:46px;width:19px;height:587px;background:#3c3f41"></div>
<div class="a" style="left:1261px;top:46px;width:1px;height:587px;background:#323232"></div>
<div class="a" style="left:1262px;top:47px;width:18px;height:66.5px;background:#2d2f30"></div>
<div class="t" style="left:10.3px;top:80.3px;font-size:11px;line-height:11px;color:#bbbbbb;letter-spacing:0.48px;transform:translate(-50%,-50%) rotate(-90deg);">1: Project</div>
<svg style="left:5.1px;top:110.1px" width="11" height="9" viewBox="0 0 11 9"><path d="M0 0 H4 L5 1.2 H10.5 V8.6 H0 Z" fill="#afb1b3"/></svg>
<div class="t" style="left:10.5px;top:173.05px;font-size:11px;line-height:11px;color:#a9a9a9;letter-spacing:0.41px;transform:translate(-50%,-50%) rotate(-90deg);">Z: Structure</div>
<svg style="left:6px;top:209px" width="10" height="10" viewBox="0 0 10 10"><rect x="0.5" y="5" width="3.6" height="3.6" fill="#9a9a9a"/><rect x="5" y="5" width="3.6" height="3.6" fill="#9a9a9a"/><rect x="5" y="0.5" width="3.6" height="3.6" fill="#9a9a9a"/></svg>
<div class="t" style="left:10.2px;top:597.55px;font-size:11px;line-height:11px;color:#a9a9a9;letter-spacing:0.32px;transform:translate(-50%,-50%) rotate(-90deg);">2: Favorites</div>
<svg style="left:6px;top:630px" width="10" height="4" viewBox="0 0 10 4"><path d="M4.6 0 V3" stroke="#9a9a9a" stroke-width="1.4"/></svg>
<div class="t" style="left:1264.1px;top:53.2px;font-size:14px;line-height:14px;font-weight:700;font-style:italic;color:#bbbbbb;letter-spacing:-0.4px">m</div>
<div class="t" style="left:1270.2px;top:88.1px;font-size:11px;line-height:11px;color:#bbbbbb;letter-spacing:0.15px;transform:translate(-50%,-50%) rotate(90deg);">Maven</div>
<svg style="left:1265px;top:124.2px" width="11" height="12" viewBox="0 0 11 12"><ellipse cx="5.3" cy="1.8" rx="5.2" ry="1.7" fill="#a9a9a9"/><path d="M0.1 2 V9.6 A5.2 1.8 0 0 0 10.5 9.6 V2" fill="#a9a9a9"/><path d="M0.2 4.6 A5.2 1.8 0 0 0 10.4 4.6 M0.2 7.3 A5.2 1.8 0 0 0 10.4 7.3" fill="none" stroke="#3c3f41" stroke-width="0.8"/></svg>
<div class="t" style="left:1270.2px;top:163.7px;font-size:11px;line-height:11px;color:#a9a9a9;letter-spacing:0.21px;transform:translate(-50%,-50%) rotate(90deg);">Database</div>
</body></html>
